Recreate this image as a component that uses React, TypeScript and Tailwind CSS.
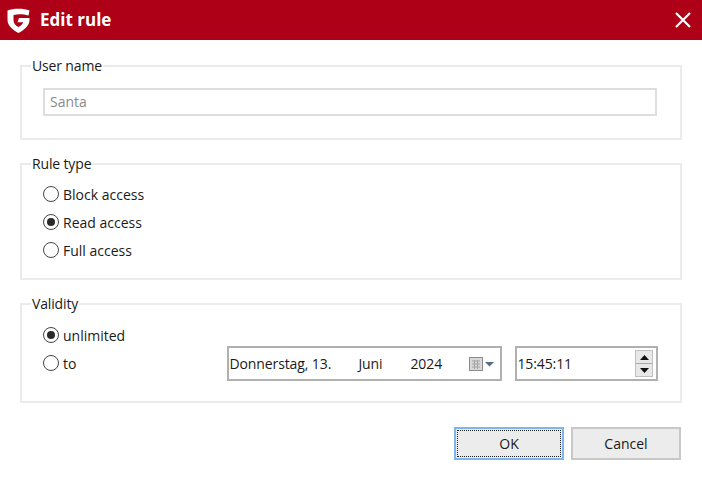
function Radio({ label, checked }: { label: string; checked?: boolean }) {
  return (
    <div className="flex items-center h-[28px] text-[14px] text-[#1a1a1a]">
      <span className="w-[16px] h-[16px] rounded-full border border-[#444] flex items-center justify-center">
        {checked && <span className="w-[8px] h-[8px] rounded-full bg-[#2a2a2a]" />}
      </span>
      <span className="ml-[4px]">{label}</span>
    </div>
  )
}

function Group({ title, className, children }: { title: string; className: string; children: React.ReactNode }) {
  return (
    <fieldset className={`border-2 border-[#ebebeb] ml-[20px] mr-[20px] px-[21px] ${className}`}>
      <legend className="-ml-[12px] px-[1px] text-[14px] leading-[18px] tracking-[-0.15px] text-[#1a1a1a]">{title}</legend>
      {children}
    </fieldset>
  )
}

export default function App() {
  return (
    <div className="w-[702px] h-[486px] bg-white overflow-hidden font-['Open_Sans','Noto_Sans',sans-serif]">
      {/* Title bar */}
      <header className="h-[40px] bg-[#ae0016] flex items-center pl-[7px] pr-[10px]">
        <svg width="23" height="25" viewBox="0 0 23 25" className="shrink-0">
          <path d="M0.5 2.5 C6 0.3 17 0.3 22.500 2.500 L21.500 7.500 C16 5.800 11 5.800 6.500 7 L6.500 12.500 C6.500 15.500 9 17.800 11.500 19 C14 17.800 15.800 16 16.200 14.200 L10.500 14.200 L12 10 L22.500 10 L22.500 12 C22.500 18 16.500 22.500 11.500 25 C6.500 22.500 0.500 18 0.500 12 Z" fill="#fff" />
        </svg>
        <h1 className="ml-[10px] text-[17px] font-bold text-white">Edit rule</h1>
        <svg width="18" height="18" viewBox="0 0 18 18" className="ml-auto">
          <path d="M2 2 L16 16 M16 2 L2 16" stroke="#fff" strokeWidth="2.2" />
        </svg>
      </header>

      <div className="pt-[17px]">
        <Group title="User name" className="h-[83px]">
          <div className="mt-[13px] mr-[2px] h-[28px] border-2 border-[#dedede] flex items-center px-[5px] pb-[2px] text-[14px] text-[#8a8a8a]">
            Santa
          </div>
        </Group>

        <Group title="Rule type" className="h-[125px] mt-[15px]">
          <div className="mt-[7px]">
            <Radio label="Block access" />
            <Radio label="Read access" checked />
            <Radio label="Full access" />
          </div>
        </Group>

        <Group title="Validity" className="h-[108px] mt-[15px]">
          <div className="mt-[8px]">
            <Radio label="unlimited" checked />
            <div className="flex items-center h-[28px]">
              <Radio label="to" />
              <div className="ml-[151px] w-[275px] h-[35px] mt-[1px] border-2 border-[#b0b0b0] flex items-center pr-[6px] text-[14px] tracking-[-0.1px] text-[#1a1a1a]">
                <span className="w-[129px]">Donnerstag, 13.</span>
                <span className="w-[52px]">Juni</span>
                <span>2024</span>
                <svg width="25" height="16" viewBox="0 0 25 16" className="ml-auto">
                  <rect x="0.5" y="1.5" width="13" height="13" fill="#d8d8d8" stroke="#8a8a8a" />
                  <path d="M3 5h8M3 8h8M3 11h8M5.500 4v9M8.500 4v9" stroke="#a5a5a5" />
                  <path d="M16 6h9l-4.500 4.500z" fill="#54698c" />
                </svg>
              </div>
              <div className="ml-[13px] w-[143px] h-[35px] mt-[1px] border-2 border-[#b0b0b0] flex items-center pr-[3px] text-[14px] tracking-[-0.1px] text-[#1a1a1a]">
                <span>15:45:11</span>
                <div className="ml-auto flex flex-col w-[18px] h-[27px] border border-[#c0c0c0] bg-[#e8e8e8]">
                  <div className="flex-1 flex items-center justify-center border-b border-[#a8a8a8]">
                    <svg width="9" height="5" viewBox="0 0 9 5"><path d="M4.500 0 9 5H0z" fill="#111" /></svg>
                  </div>
                  <div className="flex-1 flex items-center justify-center">
                    <svg width="9" height="5" viewBox="0 0 9 5"><path d="M0 0h9L4.500 5z" fill="#111" /></svg>
                  </div>
                </div>
              </div>
            </div>
          </div>
        </Group>

        <div className="mt-[24px] mr-[21px] flex justify-end gap-[7px]">
          <button className="w-[110px] h-[33px] border-2 border-[#7cb6ec] bg-[#ececec] p-[1px] text-[14px] text-[#1a1a1a]">
            <span className="flex items-center justify-center h-full border border-dotted border-[#222]">OK</span>
          </button>
          <button className="w-[110px] h-[33px] border-2 border-[#c8c8c8] bg-[#ececec] text-[14px] text-[#1a1a1a]">
            Cancel
          </button>
        </div>
      </div>
    </div>
  )
}
